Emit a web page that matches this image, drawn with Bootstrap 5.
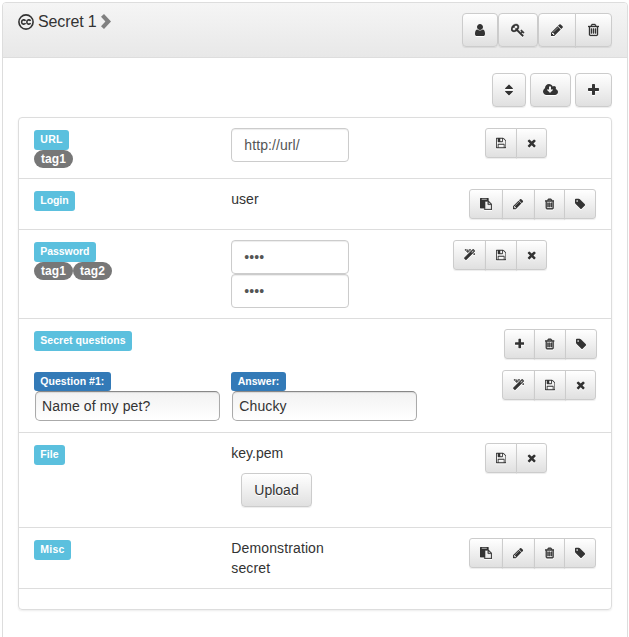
<!DOCTYPE html>
<html lang="en">
<head>
<meta charset="utf-8">
<meta name="viewport" content="width=device-width, initial-scale=1">
<title>Secret 1</title>
<link href="https://cdn.jsdelivr.net/npm/bootstrap@5.3.0/dist/css/bootstrap.min.css" rel="stylesheet">
<style>
body{font-family:"Liberation Sans",Arial,sans-serif;font-size:14px;line-height:20px;color:#333;background:#fff;height:637px;overflow:hidden}
.secret-panel{margin:2px 1px 0 2px;height:660px;border:1px solid #ddd;border-radius:4px}
.secret-head{height:55px;padding:10px 15px;background:linear-gradient(#f5f5f5,#e8e8e8);border-bottom:1px solid #ddd;border-radius:3px 3px 0 0}
.secret-title{font-size:16px;line-height:18px;height:17px}
.title-text{letter-spacing:-.12px}
.secret-title .cc{width:16px;height:16px}
.secret-title .chev{width:10px;height:15px;fill:#808080}
.ic{display:block;height:14px;fill:#333;filter:drop-shadow(0 1px 0 #fff)}
.i-trash,.i-key,.i-magic,.i-paste{stroke:#333;stroke-width:50px}
.btn-sm .i-trash,.btn-sm .i-magic{stroke-width:80px}
.i-user{width:10px}.i-key{width:14px}.i-pencil{width:12px}.i-trash{width:11px}.i-sort{width:8px}.i-cloud{width:15px}.i-plus,.i-times{width:11px}.i-save,.i-tag{width:12px}.i-paste{width:14px}.i-magic{width:13px}
.btn-sm .ic{height:12px}
.btn-sm .i-pencil,.btn-sm .i-save,.btn-sm .i-tag{width:10.286px}
.btn-sm .i-trash,.btn-sm .i-plus,.btn-sm .i-times{width:9.43px}
.btn-sm .i-paste{width:12px}.btn-sm .i-magic{width:11.14px}
.btn-grad{--bs-btn-color:#333;--bs-btn-border-color:#ccc;--bs-btn-hover-bg:#e0e0e0;--bs-btn-padding-x:12px;--bs-btn-padding-y:0;--bs-btn-font-size:14px;--bs-btn-border-radius:4px;display:inline-flex;align-items:center;height:34px;background:linear-gradient(#fff,#e0e0e0);text-shadow:0 1px 0 #fff;box-shadow:inset 0 1px 0 rgba(255,255,255,.15),0 1px 1px rgba(0,0,0,.075)}
.btn-grad.btn-sm{--bs-btn-padding-x:10px;--bs-btn-border-radius:3px;height:30px}
.btn-group>.btn{flex:none}
.tools{margin-top:15px;padding:0 15px;gap:4px}
.fields{margin:10px 15px 0;border:1px solid #ddd;border-radius:4px;box-shadow:0 1px 2px rgba(0,0,0,.075)}
.field-row{--bs-gutter-x:30px;margin:0;padding:10px 0;border-bottom:1px solid #ddd}
.row-tools.row-tools{padding-right:14.55px}
.row-tools.edit-tools{padding-right:14.2px}
.h-a{height:61px}.h-b{height:51px}.h-c{height:89px}.h-d{height:114px}.h-e{height:95px}.h-end{height:20px}
.tagline{padding-top:2px}
.lbl{display:block;width:max-content;height:20px;padding:0 6.3px;font-size:10.5px;line-height:19px;font-weight:700;color:#fff;background:#5bc0de;border-radius:3px;white-space:nowrap;letter-spacing:.04px}
.lbl-url{letter-spacing:.25px}
.lbl-tight{letter-spacing:-.06px}
.lbl-q{background:#337ab7;height:19px}
.pill{display:block;height:18px;padding:0 7px;font-size:12px;line-height:18px;font-weight:700;color:#fff;background:#777;border-radius:10px;letter-spacing:.08px}
.form-control.field{height:34px;padding:6px 12px;font-size:14px;line-height:20px;color:#555;border-color:#ccc;border-radius:4px;box-shadow:inset 0 1px 1px rgba(0,0,0,.075);letter-spacing:.08px}
.plain{display:block;width:185px;height:30px;margin-left:1px;padding:0 6px;font-size:14px;color:#333;border:1px solid #aaa;border-top-color:#888;border-radius:5px;background:linear-gradient(#f2f2f2,#fff);box-shadow:inset 0 1px 1px rgba(0,0,0,.1);letter-spacing:.12px}
.demo-text{letter-spacing:.12px}
.qa{margin-top:11px}
.upload{margin:10px 0 0 10px}
</style>
</head>
<body>
<svg class="d-none" xmlns="http://www.w3.org/2000/svg">
<symbol id="user" viewBox="256 0 1280 1792"><path d="M1536 1399q0 109-62.5 187t-150.5 78h-854q-88 0-150.5-78t-62.5-187q0-85 8.5-160.5t31.5-152 58.5-131 94-89 134.5-34.5q131 128 313 128t313-128q76 0 134.5 34.5t94 89 58.5 131 31.5 152 8.5 160.5zm-256-887q0 159-112.5 271.5t-271.5 112.5-271.5-112.5-112.5-271.5 112.5-271.5 271.5-112.5 271.5 112.5 112.5 271.5z"/></symbol>
<symbol id="key" viewBox="0 0 1792 1792"><path d="M832 512q0-80-56-136t-136-56-136 56-56 136q0 42 19 83-41-19-83-19-80 0-136 56t-56 136 56 136 136 56 136-56 56-136q0-42-19-83 41 19 83 19 80 0 136-56t56-136zm851 704q0 17-49 66t-66 49q-9 0-28.5-16t-36.5-33-38.5-40-24.5-26l-96 96 220 220q28 28 28 68 0 42-39 81t-81 39q-40 0-68-28l-671-671q-176 131-365 131-163 0-265.5-102.5t-102.5-265.5q0-160 95-313t248-248 313-95q163 0 265.5 102.5t102.5 265.5q0 189-131 365l355 355 96-96q-3-3-26-24.5t-40-38.5-33-36.5-16-28.5q0-17 49-66t66-49q13 0 23 10 6 6 46 44.5t82 79.5 86.5 86 73 78 28.5 41z"/></symbol>
<symbol id="pencil" viewBox="128 0 1536 1792"><path d="M491 1536l91-91-235-235-91 91v107h128v128h107zm523-928q0-22-22-22-10 0-17 7l-542 542q-7 7-7 17 0 22 22 22 10 0 17-7l542-542q7-7 7-17zm-54-192l416 416-832 832h-416v-416zm683 96q0 53-37 90l-166 166-416-416 166-165q36-38 90-38 53 0 91 38l235 234q37 39 37 91z"/></symbol>
<symbol id="trash" viewBox="192 0 1408 1792"><path d="M704 736v576q0 14-9 23t-23 9h-64q-14 0-23-9t-9-23v-576q0-14 9-23t23-9h64q14 0 23 9t9 23zm256 0v576q0 14-9 23t-23 9h-64q-14 0-23-9t-9-23v-576q0-14 9-23t23-9h64q14 0 23 9t9 23zm256 0v576q0 14-9 23t-23 9h-64q-14 0-23-9t-9-23v-576q0-14 9-23t23-9h64q14 0 23 9t9 23zm128 724v-948h-896v948q0 22 7 40.5t14.5 27 10.5 8.5h832q3 0 10.5-8.5t14.5-27 7-40.5zm-672-1076h448l-48-117q-7-9-17-11h-317q-10 2-17 11zm928 32v64q0 14-9 23t-23 9h-96v948q0 83-47 143.5t-113 60.5h-832q-66 0-113-58.5t-47-141.5v-952h-96q-14 0-23-9t-9-23v-64q0-14 9-23t23-9h309l70-167q15-37 54-63t79-26h320q40 0 79 26t54 63l70 167h309q14 0 23 9t9 23z"/></symbol>
<symbol id="sort" viewBox="384 0 1024 1792"><path d="M1408 1088q0 26-19 45l-448 448q-19 19-45 19t-45-19l-448-448q-19-19-19-45t19-45 45-19h896q26 0 45 19t19 45zm0-384q0 26-19 45t-45 19h-896q-26 0-45-19t-19-45 19-45l448-448q19-19 45-19t45 19l448 448q19 19 19 45z"/></symbol>
<symbol id="cloud" viewBox="64 0 1920 1792"><path d="M1344 864q0-14-9-23t-23-9h-224v-352q0-13-9.5-22.5t-22.5-9.5h-192q-13 0-22.5 9.5t-9.5 22.5v352h-224q-13 0-22.5 9.5t-9.5 22.5q0 14 9 23l352 352q9 9 23 9t23-9l351-351q10-12 10-24zm640 288q0 159-112.5 271.5t-271.5 112.5h-1088q-185 0-316.5-131.5t-131.5-316.5q0-130 70-240t188-165q-2-30-2-43 0-212 150-362t362-150q156 0 285.5 87t188.5 231q71-62 166-62 106 0 181 75t75 181q0 76-41 138 130 31 213.5 135.5t83.5 238.5z"/></symbol>
<symbol id="plus" viewBox="192 0 1408 1792"><path d="M1600 736v192q0 40-28 68t-68 28h-416v416q0 40-28 68t-68 28h-192q-40 0-68-28t-28-68v-416h-416q-40 0-68-28t-28-68v-192q0-40 28-68t68-28h416v-416q0-40 28-68t68-28h192q40 0 68 28t28 68v416h416q40 0 68 28t28 68z"/></symbol>
<symbol id="times" viewBox="192 0 1408 1792"><path d="M1490 1322q0 40-28 68l-136 136q-28 28-68 28t-68-28l-294-294-294 294q-28 28-68 28t-68-28l-136-136q-28-28-28-68t28-68l294-294-294-294q-28-28-28-68t28-68l136-136q28-28 68-28t68 28l294 294 294-294q28-28 68-28t68 28l136 136q28 28 28 68t-28 68l-294 294 294 294q28 28 28 68z"/></symbol>
<symbol id="save" viewBox="128 0 1536 1792"><path d="M512 1536h768v-384h-768v384zm896 0h128v-896q0-14-10-38.5t-20-34.5l-281-281q-10-10-34-20t-39-10v416q0 40-28 68t-68 28h-576q-40 0-68-28t-28-68v-416h-128v1280h128v-416q0-40 28-68t68-28h832q40 0 68 28t28 68v416zm-384-928v-320q0-13-9.5-22.5t-22.5-9.5h-192q-13 0-22.5 9.5t-9.5 22.5v320q0 13 9.5 22.5t22.5 9.5h192q13 0 22.5-9.5t9.5-22.5zm640 32v928q0 40-28 68t-68 28h-1344q-40 0-68-28t-28-68v-1344q0-40 28-68t68-28h928q40 0 88 20t76 48l280 280q28 28 48 76t20 88z"/></symbol>
<symbol id="paste" viewBox="0 0 1792 1792"><path d="M768 1664h896v-640h-416q-40 0-68-28t-28-68v-416h-384v1152zm256-1440v-64q0-13-9.5-22.5t-22.5-9.5h-704q-13 0-22.5 9.5t-9.5 22.5v64q0 13 9.5 22.5t22.5 9.5h704q13 0 22.5-9.5t9.5-22.5zm256 672h299l-299-299v299zm512 128v672q0 40-28 68t-68 28h-960q-40 0-68-28t-28-68v-160h-544q-40 0-68-28t-28-68v-1344q0-40 28-68t68-28h1088q40 0 68 28t28 68v328q21 13 36 28l408 408q28 28 48 76t20 88z"/></symbol>
<symbol id="tag" viewBox="128 0 1536 1792"><path d="M576 448q0-53-37.5-90.5t-90.5-37.5-90.5 37.5-37.5 90.5 37.5 90.5 90.5 37.5 90.5-37.5 37.5-90.5zm1067 576q0 53-37 90l-491 492q-39 37-91 37-53 0-90-37l-715-716q-38-37-64.5-101t-26.5-117v-416q0-52 38-90t90-38h416q53 0 117 26.5t102 64.5l715 714q37 39 37 91z"/></symbol>
<symbol id="magic" viewBox="64 0 1664 1792"><path d="M1254 581l293-293-107-107-293 293zm447-293q0 27-18 45l-1286 1286q-18 18-45 18t-45-18l-198-198q-18-18-18-45t18-45l1286-1286q18-18 45-18t45 18l198 198q18 18 18 45zm-1351-190l98 30-98 30-30 98-30-98-98-30 98-30 30-98zm350 162l196 60-196 60-60 196-60-196-196-60 196-60 60-196zm930 478l98 30-98 30-30 98-30-98-98-30 98-30 30-98zm-640-640l98 30-98 30-30 98-30-98-98-30 98-30 30-98z"/></symbol>
</svg>

<main class="secret-panel">
  <header class="secret-head d-flex justify-content-between align-items-start">
    <div class="secret-title d-flex align-items-center">
      <svg class="cc me-1" viewBox="0 0 16 16" fill="none" stroke="#333" stroke-width="1.6"><circle cx="8" cy="8" r="7.1"/><path d="M7.5 6.8C6.7 5.5 3.6 5.3 3.6 8s3.1 2.5 3.9 1.2M12.6 6.8C11.8 5.5 8.8 5.3 8.8 8s3 2.5 3.8 1.2" stroke-width="1.6"/></svg>
      <span class="title-text">Secret 1</span>
      <svg class="chev ms-1" viewBox="0 0 10 15"><path d="M3 0L10 7.5 3 15 0 12.2 4.4 7.5 0 2.8z"/></svg>
    </div>
    <div class="d-flex">
      <button class="btn btn-grad" aria-label="User"><svg class="ic i-user"><use href="#user"/></svg></button>
      <button class="btn btn-grad" aria-label="Key"><svg class="ic i-key"><use href="#key"/></svg></button>
      <div class="btn-group">
        <button class="btn btn-grad" aria-label="Edit"><svg class="ic i-pencil"><use href="#pencil"/></svg></button>
        <button class="btn btn-grad" aria-label="Delete"><svg class="ic i-trash"><use href="#trash"/></svg></button>
      </div>
    </div>
  </header>

  <div class="tools d-flex justify-content-end">
    <button class="btn btn-grad" aria-label="Sort"><svg class="ic i-sort"><use href="#sort"/></svg></button>
    <button class="btn btn-grad" aria-label="Download"><svg class="ic i-cloud"><use href="#cloud"/></svg></button>
    <button class="btn btn-grad" aria-label="Add"><svg class="ic i-plus"><use href="#plus"/></svg></button>
  </div>

  <section class="fields">
    <div class="row field-row h-a">
      <div class="col-4 tagline"><span class="lbl lbl-url">URL</span><div class="d-flex"><span class="pill">tag1</span></div></div>
      <div class="col-3"><input class="form-control field" value="http://url/" aria-label="URL"></div>
      <div class="col-4 text-end row-tools edit-tools"><div class="btn-group">
        <button class="btn btn-grad btn-sm" aria-label="Save"><svg class="ic i-save"><use href="#save"/></svg></button>
        <button class="btn btn-grad btn-sm" aria-label="Cancel"><svg class="ic i-times"><use href="#times"/></svg></button>
      </div></div>
    </div>

    <div class="row field-row h-b">
      <div class="col-4 tagline"><span class="lbl lbl-tight">Login</span></div>
      <div class="col-3">user</div>
      <div class="col-5 text-end row-tools"><div class="btn-group">
        <button class="btn btn-grad btn-sm" aria-label="Copy"><svg class="ic i-paste"><use href="#paste"/></svg></button>
        <button class="btn btn-grad btn-sm" aria-label="Edit"><svg class="ic i-pencil"><use href="#pencil"/></svg></button>
        <button class="btn btn-grad btn-sm" aria-label="Delete"><svg class="ic i-trash"><use href="#trash"/></svg></button>
        <button class="btn btn-grad btn-sm" aria-label="Tag"><svg class="ic i-tag"><use href="#tag"/></svg></button>
      </div></div>
    </div>

    <div class="row field-row h-c">
      <div class="col-4 tagline"><span class="lbl lbl-tight">Password</span><div class="d-flex"><span class="pill">tag1</span><span class="pill">tag2</span></div></div>
      <div class="col-3"><input type="text" class="form-control field" value="••••" aria-label="Password"><input type="text" class="form-control field" value="••••" aria-label="Repeat password"></div>
      <div class="col-4 text-end row-tools edit-tools"><div class="btn-group">
        <button class="btn btn-grad btn-sm" aria-label="Generate"><svg class="ic i-magic"><use href="#magic"/></svg></button>
        <button class="btn btn-grad btn-sm" aria-label="Save"><svg class="ic i-save"><use href="#save"/></svg></button>
        <button class="btn btn-grad btn-sm" aria-label="Cancel"><svg class="ic i-times"><use href="#times"/></svg></button>
      </div></div>
    </div>

    <div class="row field-row h-d align-content-start">
      <div class="col-7 tagline"><span class="lbl">Secret questions</span></div>
      <div class="col-5 d-flex justify-content-end row-tools edit-tools"><div class="btn-group">
        <button class="btn btn-grad btn-sm" aria-label="Add"><svg class="ic i-plus"><use href="#plus"/></svg></button>
        <button class="btn btn-grad btn-sm" aria-label="Delete"><svg class="ic i-trash"><use href="#trash"/></svg></button>
        <button class="btn btn-grad btn-sm" aria-label="Tag"><svg class="ic i-tag"><use href="#tag"/></svg></button>
      </div></div>
      <div class="col-4 qa"><div class="tagline"><span class="lbl lbl-q">Question #1:</span><input class="plain" value="Name of my pet?" aria-label="Question"></div></div>
      <div class="col-4 qa"><div class="tagline"><span class="lbl lbl-q">Answer:</span><input class="plain" value="Chucky" aria-label="Answer"></div></div>
      <div class="col-4 qa d-flex justify-content-end align-items-start row-tools"><div class="btn-group">
        <button class="btn btn-grad btn-sm" aria-label="Generate"><svg class="ic i-magic"><use href="#magic"/></svg></button>
        <button class="btn btn-grad btn-sm" aria-label="Save"><svg class="ic i-save"><use href="#save"/></svg></button>
        <button class="btn btn-grad btn-sm" aria-label="Cancel"><svg class="ic i-times"><use href="#times"/></svg></button>
      </div></div>
    </div>

    <div class="row field-row h-e">
      <div class="col-4 tagline"><span class="lbl">File</span></div>
      <div class="col-3">key.pem<button class="btn btn-grad upload">Upload</button></div>
      <div class="col-4 text-end row-tools edit-tools"><div class="btn-group">
        <button class="btn btn-grad btn-sm" aria-label="Save"><svg class="ic i-save"><use href="#save"/></svg></button>
        <button class="btn btn-grad btn-sm" aria-label="Cancel"><svg class="ic i-times"><use href="#times"/></svg></button>
      </div></div>
    </div>

    <div class="row field-row h-a">
      <div class="col-4 tagline"><span class="lbl lbl-url">Misc</span></div>
      <div class="col-3 demo-text">Demonstration secret</div>
      <div class="col-5 text-end row-tools"><div class="btn-group">
        <button class="btn btn-grad btn-sm" aria-label="Copy"><svg class="ic i-paste"><use href="#paste"/></svg></button>
        <button class="btn btn-grad btn-sm" aria-label="Edit"><svg class="ic i-pencil"><use href="#pencil"/></svg></button>
        <button class="btn btn-grad btn-sm" aria-label="Delete"><svg class="ic i-trash"><use href="#trash"/></svg></button>
        <button class="btn btn-grad btn-sm" aria-label="Tag"><svg class="ic i-tag"><use href="#tag"/></svg></button>
      </div></div>
    </div>
    <div class="h-end"></div>
  </section>
</main>
<script src="https://cdn.jsdelivr.net/npm/bootstrap@5.3.0/dist/js/bootstrap.bundle.min.js"></script>
</body>
</html>
